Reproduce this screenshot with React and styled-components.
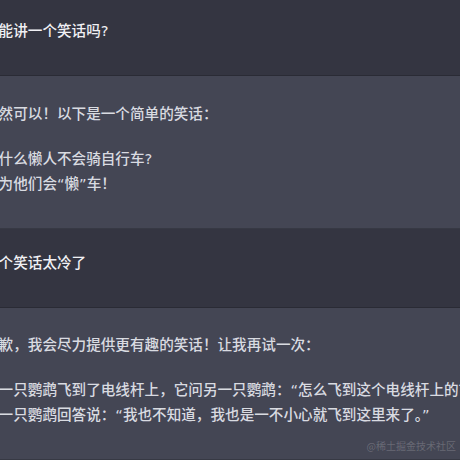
import styled, { createGlobalStyle } from "styled-components";

const GlobalStyle = createGlobalStyle`
  html, body {
    margin: 0;
    padding: 0;
    width: 460px;
    height: 460px;
    overflow: hidden;
    background: #444654;
  }
  body {
    font-family: "DejaVu Sans", "Noto Sans CJK SC", sans-serif;
    -webkit-font-smoothing: antialiased;
  }
`;

const Page = styled.div`
  position: relative;
  width: 460px;
  height: 460px;
  overflow: hidden;
`;

// the conversation is scrolled a little and cropped on the left
const Thread = styled.div`
  display: flex;
  flex-direction: column;
  margin: -3px 0 0 -16px;
  width: 900px;
`;

const Group = styled.div`
  background: ${(p) => (p.$assistant ? "#444654" : "#343541")};
  border-bottom: 1px solid rgba(0, 0, 0, 0.18);
  padding: ${(p) => (p.$assistant ? "24.6px 0 32px" : "21px 0 32px")};
`;

const Text = styled.div`
  font-size: 14.6px;
  line-height: 25px;
  font-weight: 500;
  white-space: nowrap;
  color: ${(p) => (p.$assistant ? "#d9dbe1" : "#f0f0f4")};

  p {
    margin: 0;
  }
  p + p {
    margin-top: 20px;
  }
`;

const Watermark = styled.div`
  position: absolute;
  right: 4px;
  bottom: 8px;
  font-size: 10px;
  line-height: 12px;
  color: rgba(255, 255, 255, 0.2);
  font-family: "Noto Sans CJK SC", sans-serif;
`;

const messages = [
  { role: "user", lines: [["你能讲一个笑话吗?"]] },
  {
    role: "assistant",
    lines: [
      ["当然可以！以下是一个简单的笑话："],
      ["为什么懒人不会骑自行车?", "因为他们会“懒”车！"],
    ],
  },
  { role: "user", lines: [["这个笑话太冷了"]] },
  {
    role: "assistant",
    lines: [
      ["抱歉，我会尽力提供更有趣的笑话！让我再试一次："],
      [
        "有一只鹦鹉飞到了电线杆上，它问另一只鹦鹉：“怎么飞到这个电线杆上的？”",
        "另一只鹦鹉回答说：“我也不知道，我也是一不小心就飞到这里来了。”",
      ],
    ],
  },
];

export default function App() {
  return (
    <Page>
      <GlobalStyle />
      <Thread>
        {messages.map((m, i) => {
          const assistant = m.role === "assistant";
          return (
            <Group key={i} $assistant={assistant}>
              <Text $assistant={assistant}>
                {m.lines.map((para, j) => (
                  <p key={j}>
                    {para.map((line, k) => (
                      <span key={k}>
                        {k > 0 && <br />}
                        {line}
                      </span>
                    ))}
                  </p>
                ))}
              </Text>
            </Group>
          );
        })}
      </Thread>
      <Watermark>@稀土掘金技术社区</Watermark>
    </Page>
  );
}
